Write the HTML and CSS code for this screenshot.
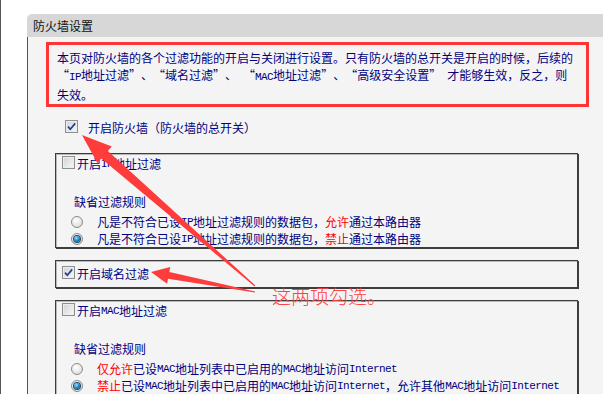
FILE: index.html
```html
<!DOCTYPE html>
<html lang="zh-CN">
<head>
    <meta charset="UTF-8">
    <meta name="viewport" content="width=device-width, initial-scale=1.0">
    <title>防火墙设置</title>
    <link rel="stylesheet" href="styles.css">
</head>
<body>
<div class="page">
    <div class="panel">
        <div class="panel-title">防火墙设置</div>
        <div class="panel-body">
            <p class="notice">本页对防火墙的各个过滤功能的开启与关闭进行设置。只有防火墙的总开关是开启的时候，后续的<br><span class="ql">“</span><span class="en">IP</span>地址过滤<span class="qr">”</span>、<span class="ql">“</span>域名过滤<span class="qr">”</span>、<span class="en">&nbsp;</span><span class="ql">“</span><span class="en">MAC</span>地址过滤<span class="qr">”</span>、<span class="ql">“</span>高级安全设置<span class="qr">”</span><span class="en">&nbsp;</span>才能够生效，反之，则<br>失效。</p>

            <div class="main-switch">
                <span class="cb on"><svg viewBox="0 0 11 11"><path d="M2 5.6 L4.3 8.3 L9.2 2.4"/></svg></span>
                开启防火墙（防火墙的总开关）
            </div>

            <!-- IP filter -->
            <div class="group">
                <div class="group-head"><span class="cb"></span>开启<span class="en">IP</span>地址过滤</div>
                <div class="rule-title">缺省过滤规则</div>
                <div class="rule"><span class="radio"></span>凡是不符合已设<span class="en">IP</span>地址过滤规则的数据包，<em>允许</em>通过本路由器</div>
                <div class="rule"><span class="radio on"></span>凡是不符合已设<span class="en">IP</span>地址过滤规则的数据包，<em>禁止</em>通过本路由器</div>
            </div>

            <!-- domain filter -->
            <div class="group group-single">
                <div class="group-head"><span class="cb on"><svg viewBox="0 0 11 11"><path d="M2 5.6 L4.3 8.3 L9.2 2.4"/></svg></span>开启域名过滤</div>
            </div>

            <!-- MAC filter -->
            <div class="group">
                <div class="group-head"><span class="cb"></span>开启<span class="en">MAC</span>地址过滤</div>
                <div class="rule-title">缺省过滤规则</div>
                <div class="rule"><span class="radio"></span><em>仅允许</em>已设<span class="en">MAC</span>地址列表中已启用的<span class="en">MAC</span>地址访问<span class="en">Internet</span></div>
                <div class="rule"><span class="radio on"></span><em>禁止</em>已设<span class="en">MAC</span>地址列表中已启用的<span class="en">MAC</span>地址访问<span class="en">Internet</span>，允许其他<span class="en">MAC</span>地址访问<span class="en">Internet</span></div>
            </div>
        </div>
    </div>

    <!-- annotation layer -->
    <svg class="marks" viewBox="0 0 603 394">
        <polygon points="81,135 110.8,146.4 106.9,150.9 254.4,285.5 253.6,286.5 100.3,158.5 96.4,163"/>
        <polygon points="150,272 169.3,267.1 168.4,272 254.1,291.4 253.9,292.6 167,278.8 166.1,283.7"/>
    </svg>
    <div class="note">这两项勾选。</div>
</div>
</body>
</html>
```

FILE: styles.css
```css
body {
    margin: 0;
    background: #fff;
    font-family: "Noto Sans CJK SC", sans-serif;
    font-size: 12px;
    color: #000080;
}

.page {
    position: relative;
    width: 602px;
    height: 394px;
    overflow: hidden;
    border-left: 1px solid #555;
}

.panel {
    margin: 14px 0 0 26px;
}

.panel-title {
    height: 23px;
    line-height: 23px;
    padding-left: 6px;
    background: #d7d7d7;
    border-top-left-radius: 5px;
    color: #111;
}

.panel-body {
    background: #f4f4f4;
    border-left: 1px solid #c02424;
    padding: 5px 0 10px 0;
}

.notice {
    box-sizing: border-box;
    width: 543px;
    margin: 0 0 0 18px;
    padding: 4px 0 1px 8px;
    border: 3px solid #ff3535;
    line-height: 17px;
}

/* full-width quotes like the old bitmap font */
.ql,
.qr {
    display: inline-block;
    width: 12px;
}

.ql {
    text-align: right;
}

.qr {
    text-align: left;
}

.en {
    font-family: "Liberation Mono", monospace;
    font-size: 11px;
    letter-spacing: -0.6px;
}

em {
    font-style: normal;
    color: #ff0000;
}

.main-switch {
    display: flex;
    align-items: center;
    height: 17px;
    margin: 12px 0 0 37px;
}

.main-switch .cb {
    margin-right: 10px;
}

.cb {
    box-sizing: border-box;
    width: 13px;
    height: 13px;
    margin-bottom: 2px;
    flex: none;
    border: 1px solid #8e8f8f;
    background: linear-gradient(135deg, #d2d2d2, #f8f8f8);
    box-shadow: inset 0 0 0 1px #ececec;
    display: flex;
    align-items: center;
    justify-content: center;
}

.cb svg {
    width: 11px;
    height: 11px;
}

.cb path {
    fill: none;
    stroke: #1f3f96;
    stroke-width: 1.7;
}

.group {
    box-sizing: border-box;
    width: 523px;
    margin: 17px 0 0 27px;
    padding: 1px 0 0 6px;
    border: 1px solid #3d3d3d;
    box-shadow: inset 1px 1px 0 #b8b8b8, 1px 1px 0 #3d3d3d;
}

.group + .group {
    margin-top: 12px;
}

.group-single {
    padding-top: 4px;
    padding-bottom: 5px;
}

.group-head {
    display: flex;
    align-items: center;
    height: 17px;
}

.group-head .cb {
    margin-right: 2px;
}

.rule-title {
    line-height: 17px;
    margin: 21px 0 0 12px;
}

.rule {
    display: flex;
    align-items: center;
    height: 17px;
    margin-top: 3px;
    white-space: nowrap;
}

.rule + .rule {
    margin-top: 0;
}

.radio {
    box-sizing: border-box;
    width: 12px;
    height: 12px;
    flex: none;
    margin: 0 14px 0 9px;
    border: 1px solid #8a8a8a;
    border-radius: 50%;
    background: radial-gradient(circle at 40% 35%, #ffffff, #d4d4d4);
    display: flex;
    align-items: center;
    justify-content: center;
}

.radio.on::after {
    content: "";
    width: 6px;
    height: 6px;
    border-radius: 50%;
    background: radial-gradient(circle at 40% 35%, #9fe0ff, #137ac0 55%, #063a66);
    box-shadow: 0 0 0 1px #234a6a;
}

.marks {
    position: absolute;
    left: 0;
    top: 0;
    width: 603px;
    height: 394px;
    pointer-events: none;
}

.marks polygon {
    fill: #ff3c3c;
}

.note {
    position: absolute;
    left: 271px;
    top: 285px;
    font-size: 19px;
    line-height: 21px;
    color: #ff4040;
    font-weight: 300;
}
```
